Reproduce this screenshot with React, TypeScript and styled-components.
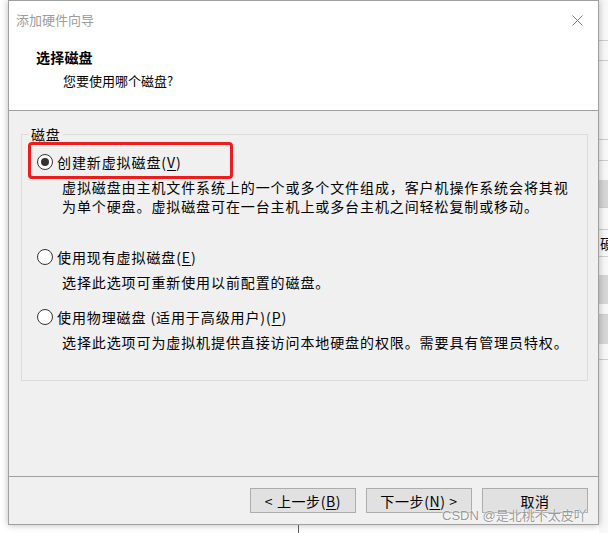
import React from 'react';
import styled, { createGlobalStyle } from 'styled-components';

const Global = createGlobalStyle`
  html, body { margin: 0; padding: 0; background: #fff; overflow: hidden; }
  body { font-family: "Noto Sans CJK SC", "Liberation Sans", sans-serif; color: #000; }
  * { box-sizing: border-box; }
`;

const Page = styled.div`
  position: relative;
  width: 608px;
  height: 533px;
  display: flex;
  background: #fff;
  overflow: hidden;
`;

const LeftGap = styled.div`
  width: 8px;
  flex: none;
`;

const Column = styled.div`
  width: 591px;
  flex: none;
  display: flex;
  flex-direction: column;
  position: relative;
  z-index: 1;
`;

const Dialog = styled.div`
  width: 591px;
  height: 525px;
  border: 1px solid #a0a0a0;
  box-shadow: 0 0 7px rgba(0, 0, 0, 0.28);
  background: #f0f0f0;
  display: flex;
  flex-direction: column;
  flex: none;
`;

const Below = styled.div`
  flex: 1;
  display: flex;
`;

const Tick = styled.div`
  margin-left: 290px;
  width: 1px;
  background: #5a5a5a;
`;

const Strip = styled.div`
  width: 9px;
  flex: none;
  display: flex;
  flex-direction: column;
  overflow: hidden;
  background: #f8f8f8;
`;

const Band = styled.div<{ $h: number; $tone: 'light' | 'gray'; $line?: boolean }>`
  height: ${p => p.$h}px;
  flex: none;
  background: ${p => (p.$tone === 'gray' ? '#d6d6d6' : '#f8f8f8')};
  border-bottom: ${p => (p.$line ? '1px solid #cdcdcd' : 'none')};
  font-size: 14px;
  line-height: ${p => p.$h}px;
  padding-left: 1px;
  white-space: nowrap;
`;

const Header = styled.header`
  height: 110px;
  flex: none;
  background: #fff;
  border-bottom: 1px solid #a0a0a0;
`;

const TitleBar = styled.div`
  height: 38px;
  display: flex;
  align-items: center;
  justify-content: space-between;
  padding: 0 15px 0 7px;
`;

const Title = styled.span`
  font-size: 13px;
  color: #9c9c9c;
  line-height: 20px;
`;

const Heading = styled.h1`
  margin: 8px 0 0 27px;
  font-size: 14px;
  font-weight: 700;
  line-height: 20px;
  letter-spacing: 0.2px;
`;

const Subheading = styled.p`
  margin: 4px 0 0 54px;
  font-size: 13px;
  line-height: 20px;
`;

const Body = styled.main`
  flex: 1;
  padding: 13px 10px 0 12px;
`;

const Group = styled.fieldset`
  margin: 0;
  padding: 0;
  min-width: 0;
  border: 1px solid #dcdcdc;
`;

const Legend = styled.legend`
  margin-left: 7px;
  padding: 0 2px;
  font-size: 14px;
  line-height: 20px;
  letter-spacing: 0.85px;
`;

const Options = styled.div`
  padding: 8px 0 28px 15px;
`;

const Option = styled.div<{ $space: number }>`
  margin-top: ${p => p.$space}px;
`;

const OptionRow = styled.div`
  position: relative;
  display: flex;
  align-items: center;
  gap: 4px;
  height: 20px;
`;

const Radio = styled.span<{ $checked?: boolean }>`
  width: 16px;
  height: 16px;
  flex: none;
  border: 1px solid #333;
  border-radius: 50%;
  background: #fff;
  display: grid;
  place-items: center;
  &::after {
    content: '';
    width: 8px;
    height: 8px;
    border-radius: 50%;
    background: ${p => (p.$checked ? '#333' : 'transparent')};
  }
`;

const Label = styled.span`
  font-size: 14px;
  line-height: 20px;
  letter-spacing: 0.9px;
  white-space: nowrap;
  u { text-decoration: underline; text-underline-offset: 2px; }
`;

const Desc = styled.p`
  margin: 6px 0 0 25px;
  font-size: 14px;
  line-height: 19px;
  letter-spacing: 0.9px;
  white-space: nowrap;
`;

const Highlight = styled.span`
  position: absolute;
  left: -9px;
  top: -10px;
  width: 205px;
  height: 37px;
  border: 3px solid #ee1d1d;
  border-radius: 4px;
  pointer-events: none;
`;

const Footer = styled.footer`
  height: 48px;
  flex: none;
  border-top: 1px solid #a0a0a0;
  display: flex;
  justify-content: flex-end;
  gap: 10px;
  padding: 11px 10px 0 0;
`;

const Button = styled.button`
  width: 106px;
  height: 25px;
  padding: 0;
  border: 1px solid #adadad;
  background: #e1e1e1;
  color: #000;
  font-family: "Noto Sans CJK SC", "Liberation Sans", sans-serif;
  font-size: 14px;
  line-height: 20px;
  letter-spacing: 0.6px;
  white-space: nowrap;
  u { text-decoration: underline; text-underline-offset: 2px; }
`;

const Watermark = styled.span`
  position: absolute;
  left: 442px;
  top: 506px;
  z-index: 2;
  font-family: "Liberation Sans", "Noto Sans CJK SC", sans-serif;
  font-size: 13px;
  line-height: 20px;
  color: rgba(125, 125, 125, 0.8);
  text-shadow: 0 0 2px #fff, 0 0 1px #fff;
  white-space: nowrap;
`;

const CloseIcon = () => (
  <svg width="11" height="11" viewBox="0 0 11 11" fill="none">
    <path d="M0.5 0.5 L10.5 10.5 M10.5 0.5 L0.5 10.5" stroke="#7a7a7a" strokeWidth="1" />
  </svg>
);

const bands: { h: number; tone: 'light' | 'gray'; line?: boolean; text?: string }[] = [
  { h: 41, tone: 'light', line: true },
  { h: 20, tone: 'light', line: true },
  { h: 79, tone: 'light', line: true },
  { h: 21, tone: 'light', line: true },
  { h: 19, tone: 'light' },
  { h: 28, tone: 'gray', line: true },
  { h: 22, tone: 'light', line: true },
  { h: 27, tone: 'light', line: true, text: '硬' },
  { h: 18, tone: 'light' },
  { h: 29, tone: 'gray' },
  { h: 11, tone: 'light', line: true },
  { h: 29, tone: 'gray' },
  { h: 16, tone: 'light', line: true },
  { h: 173, tone: 'light' },
];

const options = [
  {
    label: '创建新虚拟磁盘',
    key: 'V',
    checked: true,
    space: 0,
    lines: [
      '虚拟磁盘由主机文件系统上的一个或多个文件组成，客户机操作系统会将其视',
      '为单个硬盘。虚拟磁盘可在一台主机上或多台主机之间轻松复制或移动。',
    ],
  },
  {
    label: '使用现有虚拟磁盘',
    key: 'E',
    checked: false,
    space: 31,
    lines: ['选择此选项可重新使用以前配置的磁盘。'],
  },
  {
    label: '使用物理磁盘 (适用于高级用户)',
    key: 'P',
    checked: false,
    space: 15,
    lines: ['选择此选项可为虚拟机提供直接访问本地硬盘的权限。需要具有管理员特权。'],
  },
];

export default function App() {
  return (
    <>
      <Global />
      <Page>
        <LeftGap />
        <Column>
          <Dialog>
            <Header>
              <TitleBar>
                <Title>添加硬件向导</Title>
                <CloseIcon />
              </TitleBar>
              <Heading>选择磁盘</Heading>
              <Subheading>您要使用哪个磁盘?</Subheading>
            </Header>
            <Body>
              <Group>
                <Legend>磁盘</Legend>
                <Options>
                  {options.map((o, i) => (
                    <Option key={o.key} $space={o.space}>
                      <OptionRow>
                        <Radio $checked={o.checked} />
                        <Label>
                          {o.label}(<u>{o.key}</u>)
                        </Label>
                        {i === 0 && <Highlight />}
                      </OptionRow>
                      <Desc>
                        {o.lines.map((l, j) => (
                          <React.Fragment key={j}>
                            {j > 0 && <br />}
                            {l}
                          </React.Fragment>
                        ))}
                      </Desc>
                    </Option>
                  ))}
                </Options>
              </Group>
            </Body>
            <Footer>
              <Button>
                &lt; 上一步(<u>B</u>)
              </Button>
              <Button>
                下一步(<u>N</u>) &gt;
              </Button>
              <Button>取消</Button>
            </Footer>
          </Dialog>
          <Below>
            <Tick />
          </Below>
        </Column>
        <Strip>
          {bands.map((b, i) => (
            <Band key={i} $h={b.h} $tone={b.tone} $line={b.line}>
              {b.text}
            </Band>
          ))}
        </Strip>
        <Watermark>CSDN @是北桃不太皮吖</Watermark>
      </Page>
    </>
  );
}
